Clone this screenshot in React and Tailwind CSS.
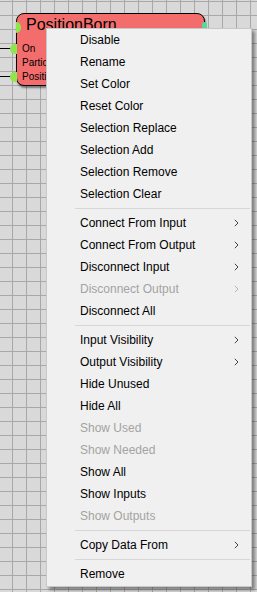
import React from "react";

const items = [
  { label: "Disable" },
  { label: "Rename" },
  { label: "Set Color" },
  { label: "Reset Color" },
  { label: "Selection Replace" },
  { label: "Selection Add" },
  { label: "Selection Remove" },
  { label: "Selection Clear" },
  { sep: true },
  { label: "Connect From Input", sub: true },
  { label: "Connect From Output", sub: true },
  { label: "Disconnect Input", sub: true },
  { label: "Disconnect Output", sub: true, disabled: true },
  { label: "Disconnect All" },
  { sep: true },
  { label: "Input Visibility", sub: true },
  { label: "Output Visibility", sub: true },
  { label: "Hide Unused" },
  { label: "Hide All" },
  { label: "Show Used", disabled: true },
  { label: "Show Needed", disabled: true },
  { label: "Show All" },
  { label: "Show Inputs" },
  { label: "Show Outputs", disabled: true },
  { sep: true },
  { label: "Copy Data From", sub: true },
  { sep: true },
  { label: "Remove" },
];

const Chevron = ({ color }) => (
  <svg width="5" height="8" viewBox="0 0 5 8" fill="none">
    <path d="M0.8 0.8 L4 4 L0.8 7.2" stroke={color} strokeWidth="1" />
  </svg>
);

// input port: wire coming from the left + green half dot
const Port = ({ label, wired }) => (
  <div className="relative h-[14px] flex items-center pl-[5px]">
    {wired && (
      <>
        <div className="absolute left-[-17px] top-[6px] w-[11px] h-px bg-black" />
        <div className="absolute left-[-7px] top-[2px] w-[7px] h-[10px] rounded-l-full bg-[#8ee64a]" />
      </>
    )}
    <span>{label}</span>
  </div>
);

export default function App() {
  return (
    <div className="relative w-[257px] h-[592px] overflow-hidden bg-[#d9d9d9] bg-[image:linear-gradient(to_right,#a8a8a8_1px,transparent_1px),linear-gradient(to_bottom,#a8a8a8_1px,transparent_1px)] bg-[size:14px_14px] bg-[position:12px_1px] font-['Liberation_Sans',Arial,sans-serif]">

      {/* node */}
      <div className="absolute left-[16px] top-[13px] w-[189px] h-[73px] rounded-[8px] border border-black bg-[#f36d6d] shadow-[1px_2px_2px_rgba(0,0,0,0.45)]">
        <div className="pl-[9px] pt-[1px] text-[16px] leading-[19px] text-black">PositionBorn</div>
        <div className="pt-[8px] flex flex-col text-[10px] leading-[14px] text-black">
          <Port label="On" wired />
          <Port label="Particles" />
          <Port label="Position" wired />
        </div>
        <div className="absolute -left-px top-[8px] w-[5px] h-[11px] rounded-r-full bg-[#8ee64a]" />
        <div className="absolute right-[-3px] top-[8px] w-[5px] h-[10px] rounded-full bg-[#5ad89a]" />
      </div>

      {/* context menu */}
      <div className="absolute left-[46px] top-[28px] w-[206px] border border-[#c8c8c8] bg-[#f0f0f0] pb-[1px] shadow-[3px_3px_3px_rgba(0,0,0,0.4)] text-[12px]">
        {items.map((it, i) =>
          it.sep ? (
            <div key={i} className="h-[7px] flex items-center pl-[28px] pr-[1px]">
              <div className="w-full h-px bg-[#d7d7d7]" />
            </div>
          ) : (
            <div
              key={i}
              className={`h-[22px] flex items-center justify-between pl-[33px] pr-[12px] ${
                it.disabled ? "text-[#a3a3a3]" : "text-black"
              }`}
            >
              <span>{it.label}</span>
              {it.sub && <Chevron color={it.disabled ? "#b5b5b5" : "#444"} />}
            </div>
          )
        )}
      </div>
    </div>
  );
}
